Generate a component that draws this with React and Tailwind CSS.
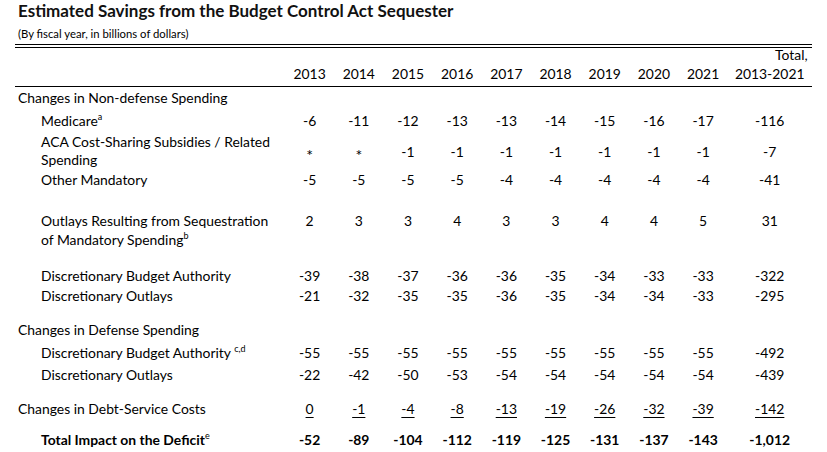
import React from 'react';

const years = ['2013', '2014', '2015', '2016', '2017', '2018', '2019', '2020', '2021'];

// Row heights are set so each baseline sits where the printed table has it
const rows = [
  { label: 'Changes in Non-defense Spending', h: 'h-[23px]' },
  { label: 'Medicare', sup: 'a', indent: true, h: 'h-[21.5px]', vals: ['-6', '-11', '-12', '-13', '-13', '-14', '-15', '-16', '-17'], total: '-116' },
  { label: ['ACA Cost-Sharing Subsidies / Related', 'Spending'], indent: true, h: 'h-[37px]', lead: 'leading-[18px]', valPad: 'pt-[9px]', vals: ['*', '*', '-1', '-1', '-1', '-1', '-1', '-1', '-1'], total: '-7' },
  { label: 'Other Mandatory', indent: true, h: 'h-[41.5px]', vals: ['-5', '-5', '-5', '-5', '-4', '-4', '-4', '-4', '-4'], total: '-41' },
  { label: ['Outlays Resulting from Sequestration', 'of Mandatory Spending'], sup: 'b', indent: true, h: 'h-[54.5px]', lead: 'leading-[19px]', vals: ['2', '3', '3', '4', '3', '3', '4', '4', '5'], total: '31' },
  { label: 'Discretionary Budget Authority', indent: true, h: 'h-[20.5px]', vals: ['-39', '-38', '-37', '-36', '-36', '-35', '-34', '-33', '-33'], total: '-322' },
  { label: 'Discretionary Outlays', indent: true, h: 'h-[33.5px]', vals: ['-21', '-32', '-35', '-35', '-36', '-35', '-34', '-34', '-33'], total: '-295' },
  { label: 'Changes in Defense Spending', h: 'h-[23px]' },
  { label: 'Discretionary Budget Authority ', sup: 'c,d', indent: true, h: 'h-[22px]', vals: ['-55', '-55', '-55', '-55', '-55', '-55', '-55', '-55', '-55'], total: '-492' },
  { label: 'Discretionary Outlays', indent: true, h: 'h-[34px]', vals: ['-22', '-42', '-50', '-53', '-54', '-54', '-54', '-54', '-54'], total: '-439' },
  { label: 'Changes in Debt-Service Costs', h: 'h-[31px]', underline: true, vals: ['0', '-1', '-4', '-8', '-13', '-19', '-26', '-32', '-39'], total: '-142' },
  { label: 'Total Impact on the Deficit', sup: 'e', indent: true, bold: true, h: 'h-[22px]', vals: ['-52', '-89', '-104', '-112', '-119', '-125', '-131', '-137', '-143'], total: '-1,012' },
];

const grid = 'grid grid-cols-[270px_repeat(9,49.2px)_84px]';

const Sup = ({ children }) => (
  <span className="text-[9px] relative -top-[6px] font-normal">{children}</span>
);

const Label = ({ row }) => {
  const lines = Array.isArray(row.label) ? row.label : [row.label];
  return (
    <div className={`${row.indent ? 'pl-[26px]' : 'pl-[3px]'} ${row.lead || 'leading-[20px]'} ${row.bold ? 'font-bold' : ''}`}>
      {lines.map((line, i) => (
        <div key={i} className="whitespace-nowrap">
          {line}
          {i === lines.length - 1 && row.sup && <Sup>{row.sup}</Sup>}
        </div>
      ))}
    </div>
  );
};

const Value = ({ v, row }) => (
  <div className={`text-center leading-[20px] ${row.valPad || ''} ${row.bold ? 'font-bold' : ''}`}>
    {v === '*' ? (
      // the asterisk marks less than $500 million; it sits low and large in the print
      <span className="relative top-[3px] text-[16px]">*</span>
    ) : (
      <span className={row.underline ? 'underline decoration-1 underline-offset-[3px]' : ''}>{v}</span>
    )}
  </div>
);

export default function App() {
  return (
    <div className="w-[827px] h-[452px] bg-white text-black overflow-hidden font-['Lato',sans-serif]">
      <h1 className="pl-[18px] h-[22px] leading-[22px] text-[17px] font-bold text-[#111]">
        Estimated Savings from the Budget Control Act Sequester
      </h1>
      <p className="mt-[5px] pl-[18px] h-[14px] leading-[14px] text-[11.3px]">
        (By fiscal year, in billions of dollars)
      </p>

      <div className="ml-[15px] w-[797px] text-[13.9px]">
        {/* double rule */}
        <div className="mt-[3px] h-[4px] border-t border-b border-black" />

        {/* column headings */}
        <div className={`${grid} border-b border-black`}>
          <div />
          {years.map((y) => <div key={y} />)}
          <div className="h-[14px] leading-[14px] text-right pr-[4px]">Total,</div>
          <div className="h-[24px]" />
          {years.map((y) => (
            <div key={y} className="h-[24px] leading-[24px] text-center">{y}</div>
          ))}
          <div className="h-[24px] leading-[24px] text-center">2013-2021</div>
        </div>

        <div className="mt-[1px]">
          {rows.map((row, i) => (
            <div key={i} className={`${grid} ${row.h}`}>
              <Label row={row} />
              {row.vals
                ? row.vals.map((v, j) => <Value key={j} v={v} row={row} />)
                : years.map((y) => <div key={y} />)}
              {row.vals ? <Value v={row.total} row={row} /> : <div />}
            </div>
          ))}
        </div>
      </div>
    </div>
  );
}
